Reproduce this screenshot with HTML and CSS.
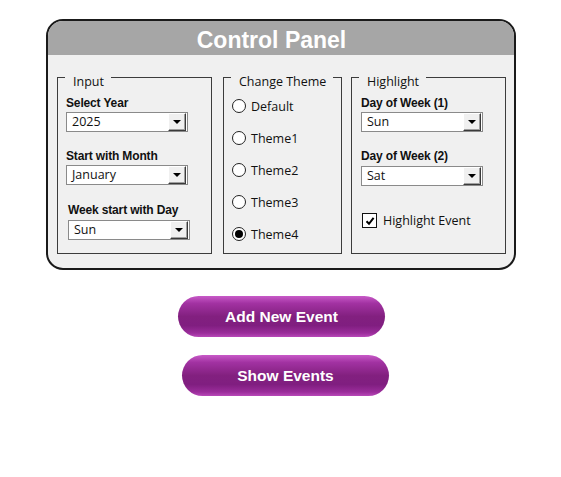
FILE: index.html
```html
<!DOCTYPE html>
<html lang="en">
<head>
  <meta charset="UTF-8">
  <title>Control Panel</title>
  <link rel="stylesheet" href="styles.css">
</head>
<body>
  <div class="panel">
    <div class="panel-head">Control Panel</div>
    <div class="panel-body">
      <div class="group group-input">
        <span class="group-title">Input</span>
        <div class="field-label first">Select Year</div>
        <div class="dropdown"><span>2025</span><i class="arrow"></i></div>
        <div class="field-label">Start with Month</div>
        <div class="dropdown"><span>January</span><i class="arrow"></i></div>
        <div class="field-label shift">Week start with Day</div>
        <div class="dropdown shift"><span>Sun</span><i class="arrow"></i></div>
      </div>
      <div class="group group-theme">
        <span class="group-title">Change Theme</span>
        <label class="radio"><i class="dot"></i>Default</label>
        <label class="radio"><i class="dot"></i>Theme1</label>
        <label class="radio"><i class="dot"></i>Theme2</label>
        <label class="radio"><i class="dot"></i>Theme3</label>
        <label class="radio checked"><i class="dot"></i>Theme4</label>
      </div>
      <div class="group group-highlight">
        <span class="group-title">Highlight</span>
        <div class="field-label first">Day of Week (1)</div>
        <div class="dropdown"><span>Sun</span><i class="arrow"></i></div>
        <div class="field-label">Day of Week (2)</div>
        <div class="dropdown low"><span>Sat</span><i class="arrow"></i></div>
        <label class="check">
          <i class="box"><svg width="10" height="10" viewBox="0 0 10 10"><path d="M1.5 5.2 L4 7.8 L8.6 1.8" fill="none" stroke="#000" stroke-width="2"/></svg></i>
          Highlight Event
        </label>
      </div>
    </div>
  </div>

  <div class="actions">
    <button class="pill">Add New Event</button>
    <button class="pill second">Show Events</button>
  </div>
</body>
</html>
```

FILE: styles.css
```css
body {
  margin: 0;
  background: #fff;
  font-family: 'Open Sans', 'Segoe UI', sans-serif;
  font-size: 12.5px;
  color: #111;
}
.panel {
  margin: 19px 0 0 46px;
  width: 466px;
  height: 247px;
  border: 2px solid #1a1a1a;
  border-radius: 17px;
  background: #f0f0f0;
  overflow: hidden;
}
.panel-head {
  height: 34px;
  padding-right: 19px;
  background: #a6a6a6;
  color: #fff;
  font-family: 'Liberation Sans', Arial, sans-serif;
  font-weight: bold;
  font-size: 23px;
  line-height: 39px;
  text-align: center;
}
.panel-body {
  display: flex;
  padding: 22px 0 0 9px;
}
.group {
  position: relative;
  border: 1px solid #3c3c3c;
  box-sizing: border-box;
  height: 177px;
}
.group-input {
  width: 155px;
  padding: 0 0 0 8px;
}
.group-theme {
  width: 119px;
  margin-left: 11px;
  padding: 20px 0 0 8px;
}
.group-highlight {
  width: 155px;
  margin-left: 9px;
  padding: 0 0 0 9px;
}
.group-title {
  position: absolute;
  top: -4px;
  left: 7px;
  padding: 0 7px 0 8px;
  background: #f0f0f0;
  line-height: 16px;
}
.field-label {
  font-family: 'Liberation Sans', Arial, sans-serif;
  font-weight: bold;
  font-size: 12px;
  letter-spacing: -0.15px;
  line-height: 14px;
  margin-top: 17px;
  margin-bottom: 2px;
}
.field-label.first {
  margin-top: 18px;
}
.shift {
  margin-left: 2px;
}
.group-input .field-label.shift {
  margin-top: 18px;
  margin-bottom: 3px;
}
.dropdown {
  display: flex;
  align-items: center;
  width: 122px;
  height: 20px;
  box-sizing: border-box;
  border: 1px solid #8a8a8a;
  background: #fff;
  padding: 0 1px 0 5px;
}
.dropdown.low {
  margin-top: 3px;
}
.dropdown span {
  flex: 1;
  line-height: 18px;
}
.arrow {
  position: relative;
  width: 18px;
  height: 18px;
  box-sizing: border-box;
  background: #f0f0f0;
  border: 1px solid;
  border-color: #fff #3a3a3a #3a3a3a #fff;
  box-shadow: inset -1px -1px 0 #a0a0a0;
}
.arrow::after {
  content: '';
  position: absolute;
  left: 4px;
  top: 6px;
  border-left: 4px solid transparent;
  border-right: 4px solid transparent;
  border-top: 4px solid #000;
}
.radio {
  display: flex;
  align-items: center;
  height: 16px;
  margin-bottom: 16px;
}
.dot {
  width: 14px;
  height: 14px;
  box-sizing: border-box;
  border: 1px solid #222;
  border-radius: 50%;
  background: #fff;
  margin-right: 5px;
  display: flex;
  align-items: center;
  justify-content: center;
}
.radio.checked .dot::after {
  content: '';
  width: 8px;
  height: 8px;
  border-radius: 50%;
  background: #000;
}
.check {
  display: flex;
  align-items: center;
  margin-top: 26px;
  margin-left: 1px;
}
.box {
  width: 15px;
  height: 15px;
  box-sizing: border-box;
  border: 1px solid #111;
  background: #fff;
  display: flex;
  align-items: center;
  justify-content: center;
  margin-right: 6px;
}
.actions {
  display: flex;
  flex-direction: column;
  align-items: flex-start;
  padding: 26px 0 0 178px;
  gap: 18px;
}
.pill {
  width: 207px;
  height: 41px;
  border: none;
  border-radius: 21px;
  color: #fff;
  font-family: 'Liberation Sans', Arial, sans-serif;
  font-weight: bold;
  font-size: 15.5px;
  background: linear-gradient(to bottom, #c85ac8 0%, #a232a2 18%, #82207f 50%, #801e80 72%, #9a2c9a 90%, #b848b8 100%);
}
.pill.second {
  margin-left: 4px;
}
```
